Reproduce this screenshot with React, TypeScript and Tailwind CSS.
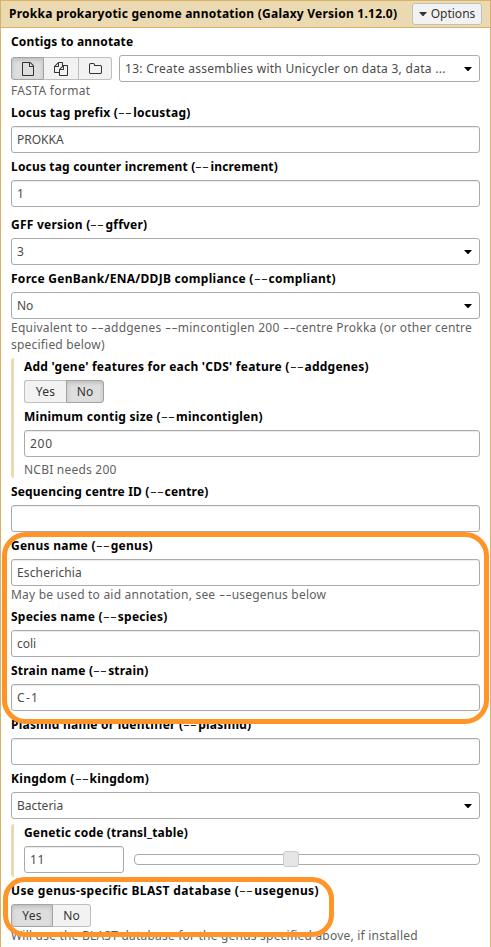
import type { ReactNode } from 'react';

/** Renders text, drawing the "--" of option flags as wide, light dashes. */
function Flagged({ text, dash }: { text: string; dash: string }) {
  return (
    <>
      {text.split('--').map((part, i) => (
        <span key={i}>
          {i > 0 && <span className={`inline-block origin-left font-normal tracking-[0.2px] ${dash}`}>--</span>}
          {part}
        </span>
      ))}
    </>
  );
}

function Label({ text, className = '' }: { text: string; className?: string }) {
  return (
    <div className={`h-[18px] whitespace-nowrap font-bold leading-[18px] text-black ${className}`}>
      <Flagged text={text} dash="w-[15px] scale-x-[1.75] text-[#222]" />
    </div>
  );
}

function Help({ text, className = '' }: { text: string; className?: string }) {
  return (
    <div className={`h-[17px] whitespace-nowrap leading-[17px] text-[#5f5f5f] ${className}`}>
      <Flagged text={text} dash="w-[13px] scale-x-[1.6]" />
    </div>
  );
}

function Caret({ className = '' }: { className?: string }) {
  return (
    <svg viewBox="0 0 8 4.5" className={`h-[4.5px] w-2 shrink-0 fill-current ${className}`}>
      <path d="M0 0H8L4 4.5Z" />
    </svg>
  );
}

function Box({ value = '', select = false, className = '', textClass = '' }: {
  value?: string;
  select?: boolean;
  className?: string;
  textClass?: string;
}) {
  return (
    <div
      className={`flex h-[27px] items-center justify-between rounded-[3px] border border-[#aaa] bg-white pl-[5px] pr-[7px] text-[#4a4a4a] ${select ? '' : 'shadow-[inset_0_1px_1px_rgba(0,0,0,0.08)]'} ${className}`}
    >
      <span className={`whitespace-nowrap ${textClass}`}>{value}</span>
      {select && <Caret className="mt-px text-black" />}
    </div>
  );
}

function Field({ label, labelClass, children, className = '' }: {
  label: string;
  labelClass?: string;
  children: ReactNode;
  className?: string;
}) {
  return (
    <div className={`flex flex-col ${className}`}>
      <Label text={label} className={labelClass} />
      <div className="mt-1">{children}</div>
    </div>
  );
}

const pressed = 'bg-[#dedede] shadow-[inset_0_2px_4px_rgba(0,0,0,0.15)] border-[#a3a3a3]';
const idle = 'bg-[#f2f2f2] border-[#bfbfbf]';

function YesNo({ yes }: { yes: boolean }) {
  return (
    <div className="flex h-[23px] text-[#333]">
      <span className={`flex w-[42px] items-center justify-center rounded-l-[3px] border tracking-[0.2px] ${yes ? pressed : `${idle} border-r-0`}`}>Yes</span>
      <span className={`flex w-[38px] items-center justify-center rounded-r-[3px] border ${yes ? `${idle} border-l-0` : pressed}`}>No</span>
    </div>
  );
}

function Section({ children, className = '' }: { children: ReactNode; className?: string }) {
  return <div className={`flex flex-col gap-[5px] rounded-[3px] border-l-[3px] border-[#ebd9b2] pl-[10px] ${className}`}>{children}</div>;
}

export default function App() {
  return (
    <div className="relative h-[947px] w-[491px] overflow-hidden border-x border-t border-[#d8b365] bg-white font-['Noto_Sans','Open_Sans',sans-serif] text-[12px]">
      <header className="flex h-[27px] items-center justify-between border-b border-[#d8b365] bg-[#ebd9b2] pl-2 pr-2">
        <span className="whitespace-nowrap font-bold tracking-[0.24px] text-black">Prokka prokaryotic genome annotation (Galaxy Version 1.12.0)</span>
        <span className="flex h-[22px] w-[70px] items-center justify-center gap-1 rounded-[3px] border border-[#bfbfbf] bg-[#f2f2f2] text-[#333]">
          <Caret />
          <span>Options</span>
        </span>
      </header>

      <main className="flex flex-col gap-[5px] pl-[10px] pr-[10px] pt-[5px]">
        <Field label="Contigs to annotate" labelClass="tracking-[0.15px]">
          <div className="flex items-center justify-between">
            <div className="flex h-[23px] text-[#333]">
              <span className={`flex w-[33px] items-center justify-center rounded-l-[3px] border ${pressed}`}>
                <svg viewBox="0 0 1536 1792" className="h-[14px] w-3 fill-current">
                  <path d="M1468 380q28 28 48 76t20 88v1152q0 40-28 68t-68 28h-1344q-40 0-68-28t-28-68v-1600q0-40 28-68t68-28h896q40 0 88 20t76 48zm-444-244v376h376q-10-29-22-41l-313-313q-12-12-41-22zm384 1528v-1024h-416q-40 0-68-28t-28-68v-416h-768v1536h1280z" />
                </svg>
              </span>
              <span className={`flex w-[35px] items-center justify-center border border-l-0 ${idle}`}>
                <svg viewBox="0 0 1792 1792" className="size-[14px] fill-current">
                  <path d="M1696 384q40 0 68 28t28 68v1216q0 40-28 68t-68 28h-960q-40 0-68-28t-28-68v-288h-544q-40 0-68-28t-28-68v-672q0-40 20-88t48-76l408-408q28-28 76-48t88-20h416q40 0 68 28t28 68v328q68-40 128-40h416zm-544 213l-299 299h299v-299zm-640-384l-299 299h299v-299zm196 647l316-316v-416h-384v416q0 40-28 68t-68 28h-416v640h512v-256q0-40 20-88t48-76zm956 804v-1152h-384v416q0 40-28 68t-68 28h-416v640h896z" />
                </svg>
              </span>
              <span className={`flex w-[33px] items-center justify-center rounded-r-[3px] border border-l-0 ${idle}`}>
                <svg viewBox="0 0 1664 1792" className="h-[14px] w-[13px] fill-current">
                  <path d="M1536 1312v-704q0-40-28-68t-68-28h-704q-40 0-68-28t-28-68v-64q0-40-28-68t-68-28h-320q-40 0-68 28t-28 68v960q0 40 28 68t68 28h1216q40 0 68-28t28-68zm128-704v704q0 92-66 158t-158 66h-1216q-92 0-158-66t-66-158v-960q0-92 66-158t158-66h320q92 0 158 66t66 158v32h672q92 0 158 66t66 158z" />
                </svg>
              </span>
            </div>
            <Box
              select
              value="13: Create assemblies with Unicycler on data 3, data ..."
              className="w-[361px]"
              textClass="tracking-[0.28px]"
            />
          </div>
          <Help text="FASTA format" className="tracking-[0.33px]" />
        </Field>

        <Field label="Locus tag prefix (--locustag)" labelClass="tracking-[0.25px]">
          <Box value="PROKKA" />
        </Field>
        <Field label="Locus tag counter increment (--increment)" labelClass="tracking-[0.17px]">
          <Box value="1" />
        </Field>
        <Field label="GFF version (--gffver)" labelClass="tracking-[0.23px]" className="mt-1">
          <Box select value="3" />
        </Field>
        <Field label="Force GenBank/ENA/DDJB compliance (--compliant)" labelClass="tracking-[0.28px]">
          <Box select value="No" />
          <Help text="Equivalent to --addgenes --mincontiglen 200 --centre Prokka (or other centre" className="tracking-[0.23px]" />
          <Help text="specified below)" className="tracking-[0.2px]" />
        </Field>

        <Section>
          <Field label="Add 'gene' features for each 'CDS' feature (--addgenes)" labelClass="tracking-[0.24px]">
            <YesNo yes={false} />
          </Field>
          <Field label="Minimum contig size (--mincontiglen)" labelClass="tracking-[0.26px]">
            <Box value="200" textClass="tracking-[0.7px]" />
            <Help text="NCBI needs 200" className="mt-1 tracking-[0.22px]" />
          </Field>
        </Section>

        <Field label="Sequencing centre ID (--centre)" labelClass="tracking-[0.17px]">
          <Box />
        </Field>
        <Field label="Genus name (--genus)" labelClass="tracking-[0.26px]">
          <Box value="Escherichia" textClass="tracking-[0.14px]" />
          <Help text="May be used to aid annotation, see --usegenus below" className="tracking-[0.21px]" />
        </Field>
        <Field label="Species name (--species)" labelClass="tracking-[0.24px]">
          <Box value="coli" />
        </Field>
        <Field label="Strain name (--strain)" labelClass="tracking-[0.19px]">
          <Box value="C-1" textClass="tracking-[1.3px]" />
        </Field>
        <Field label="Plasmid name or identifier (--plasmid)" labelClass="tracking-[0.22px]">
          <Box />
        </Field>
        <Field label="Kingdom (--kingdom)" labelClass="tracking-[0.29px]">
          <Box select value="Bacteria" />
        </Field>

        <Section className="pb-1">
          <Field label="Genetic code (transl_table)" labelClass="tracking-[0.18px]">
            <div className="flex items-center gap-[10px]">
              <Box value="11" className="w-[100px]" textClass="tracking-[0.7px]" />
              <div className="flex h-[11px] flex-1 items-center justify-center rounded-[4px] border border-[#aaa] bg-white pr-[33px]">
                <span className="size-4 shrink-0 -translate-y-px rounded-[3px] border border-[#ccc] bg-[#e6e6e6]" />
              </div>
            </div>
          </Field>
        </Section>

        <Field label="Use genus-specific BLAST database (--usegenus)" labelClass="tracking-[0.36px]">
          <YesNo yes />
          <Help text="Will use the BLAST database for the genus specified above, if installed" className="tracking-[0.21px]" />
        </Field>
      </main>

      <div className="absolute left-px top-[531px] h-[192px] w-[487px] rounded-[24px] border-[5px] border-[#ff9428]" />
      <div className="absolute left-[2px] top-[876px] h-[60px] w-[331px] rounded-[22px] border-[5px] border-[#ff9428]" />
    </div>
  );
}
